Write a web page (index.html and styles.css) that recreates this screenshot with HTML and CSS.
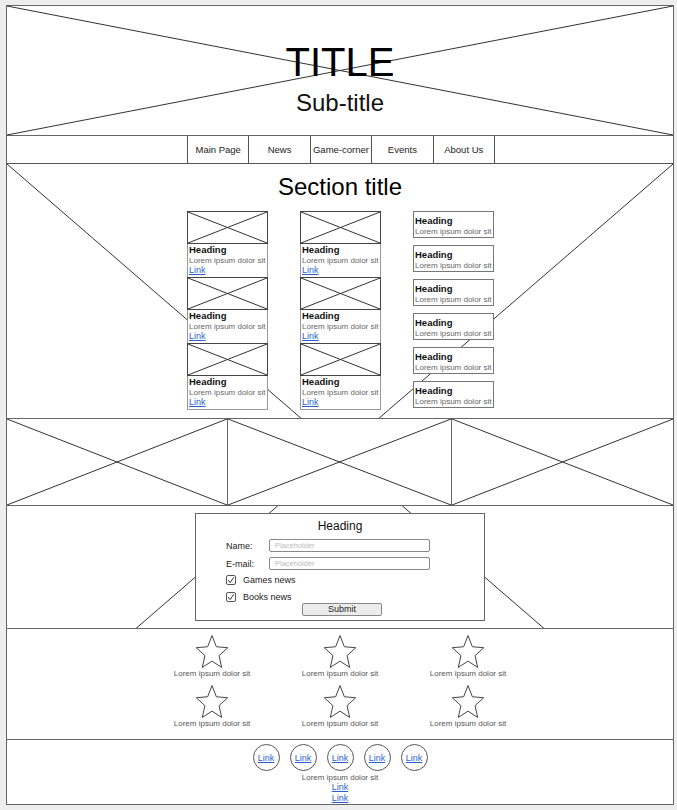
FILE: index.html
```html
<!DOCTYPE html>
<html lang="en">
<head>
<meta charset="utf-8">
<title>Wireframe</title>
<link rel="stylesheet" href="styles.css">
</head>
<body>
<div class="frame">
  <header class="hero">
    <svg class="xlines" viewBox="0 0 100 100" preserveAspectRatio="none"><line x1="0" y1="0" x2="100" y2="100"/><line x1="100" y1="0" x2="0" y2="100"/></svg>
    <h1 class="title">TITLE</h1>
    <p class="subtitle">Sub-title</p>
  </header>

  <nav class="nav">
    <a class="nav-item">Main Page</a>
    <a class="nav-item">News</a>
    <a class="nav-item">Game-corner</a>
    <a class="nav-item">Events</a>
    <a class="nav-item">About Us</a>
  </nav>

  <main class="main">
    <svg class="xlines" viewBox="0 0 100 100" preserveAspectRatio="none"><line x1="0" y1="0" x2="100" y2="100"/><line x1="100" y1="0" x2="0" y2="100"/></svg>

    <section class="sec-cards">
      <h2 class="sec-title">Section title</h2>
      <div class="card-grid">
        <div class="stack">
          <div class="card">
            <div class="thumb"><svg class="xlines" viewBox="0 0 100 100" preserveAspectRatio="none"><line x1="0" y1="0" x2="100" y2="100"/><line x1="100" y1="0" x2="0" y2="100"/></svg></div>
            <div class="card-body"><div class="card-h">Heading</div><div class="card-t">Lorem ipsum dolor sit</div><a class="card-link">Link</a></div>
          </div>
          <div class="card">
            <div class="thumb"><svg class="xlines" viewBox="0 0 100 100" preserveAspectRatio="none"><line x1="0" y1="0" x2="100" y2="100"/><line x1="100" y1="0" x2="0" y2="100"/></svg></div>
            <div class="card-body"><div class="card-h">Heading</div><div class="card-t">Lorem ipsum dolor sit</div><a class="card-link">Link</a></div>
          </div>
          <div class="card">
            <div class="thumb"><svg class="xlines" viewBox="0 0 100 100" preserveAspectRatio="none"><line x1="0" y1="0" x2="100" y2="100"/><line x1="100" y1="0" x2="0" y2="100"/></svg></div>
            <div class="card-body"><div class="card-h">Heading</div><div class="card-t">Lorem ipsum dolor sit</div><a class="card-link">Link</a></div>
          </div>
        </div>
        <div class="stack">
          <div class="card">
            <div class="thumb"><svg class="xlines" viewBox="0 0 100 100" preserveAspectRatio="none"><line x1="0" y1="0" x2="100" y2="100"/><line x1="100" y1="0" x2="0" y2="100"/></svg></div>
            <div class="card-body"><div class="card-h">Heading</div><div class="card-t">Lorem ipsum dolor sit</div><a class="card-link">Link</a></div>
          </div>
          <div class="card">
            <div class="thumb"><svg class="xlines" viewBox="0 0 100 100" preserveAspectRatio="none"><line x1="0" y1="0" x2="100" y2="100"/><line x1="100" y1="0" x2="0" y2="100"/></svg></div>
            <div class="card-body"><div class="card-h">Heading</div><div class="card-t">Lorem ipsum dolor sit</div><a class="card-link">Link</a></div>
          </div>
          <div class="card">
            <div class="thumb"><svg class="xlines" viewBox="0 0 100 100" preserveAspectRatio="none"><line x1="0" y1="0" x2="100" y2="100"/><line x1="100" y1="0" x2="0" y2="100"/></svg></div>
            <div class="card-body"><div class="card-h">Heading</div><div class="card-t">Lorem ipsum dolor sit</div><a class="card-link">Link</a></div>
          </div>
        </div>
        <div class="minis">
          <div class="mini"><div class="card-h">Heading</div><div class="card-t">Lorem ipsum dolor sit</div></div>
          <div class="mini"><div class="card-h">Heading</div><div class="card-t">Lorem ipsum dolor sit</div></div>
          <div class="mini"><div class="card-h">Heading</div><div class="card-t">Lorem ipsum dolor sit</div></div>
          <div class="mini"><div class="card-h">Heading</div><div class="card-t">Lorem ipsum dolor sit</div></div>
          <div class="mini"><div class="card-h">Heading</div><div class="card-t">Lorem ipsum dolor sit</div></div>
          <div class="mini"><div class="card-h">Heading</div><div class="card-t">Lorem ipsum dolor sit</div></div>
        </div>
      </div>
    </section>

    <section class="strip">
      <div class="cell"><svg class="xlines" viewBox="0 0 100 100" preserveAspectRatio="none"><line x1="0" y1="0" x2="100" y2="100"/><line x1="100" y1="0" x2="0" y2="100"/></svg></div>
      <div class="cell"><svg class="xlines" viewBox="0 0 100 100" preserveAspectRatio="none"><line x1="0" y1="0" x2="100" y2="100"/><line x1="100" y1="0" x2="0" y2="100"/></svg></div>
      <div class="cell"><svg class="xlines" viewBox="0 0 100 100" preserveAspectRatio="none"><line x1="0" y1="0" x2="100" y2="100"/><line x1="100" y1="0" x2="0" y2="100"/></svg></div>
    </section>

    <section class="sec-form">
      <form class="form-box">
        <h3 class="form-h">Heading</h3>
        <div class="field f1"><label>Name:</label><input type="text" placeholder="Placeholder"></div>
        <div class="field f2"><label>E-mail:</label><input type="text" placeholder="Placeholder"></div>
        <div class="check c1"><svg class="cb" viewBox="0 0 10 10"><rect x="0.5" y="0.5" width="9" height="9" rx="1.5"/><path d="M2.2 5.1 L4.2 7.6 L7.8 2.2"/></svg><span>Games news</span></div>
        <div class="check c2"><svg class="cb" viewBox="0 0 10 10"><rect x="0.5" y="0.5" width="9" height="9" rx="1.5"/><path d="M2.2 5.1 L4.2 7.6 L7.8 2.2"/></svg><span>Books news</span></div>
        <button type="button" class="submit">Submit</button>
      </form>
    </section>

    <section class="stars">
      <div class="star-item"><svg class="star" viewBox="-9.7 -10.3 19.4 18.7" preserveAspectRatio="none"><path d="M0 -10 L2.645 -3.64 L9.511 -3.09 L4.28 1.391 L5.878 8.09 L0 4.5 L-5.878 8.09 L-4.28 1.391 L-9.511 -3.09 L-2.645 -3.64 Z"/></svg><p>Lorem ipsum dolor sit</p></div>
      <div class="star-item"><svg class="star" viewBox="-9.7 -10.3 19.4 18.7" preserveAspectRatio="none"><path d="M0 -10 L2.645 -3.64 L9.511 -3.09 L4.28 1.391 L5.878 8.09 L0 4.5 L-5.878 8.09 L-4.28 1.391 L-9.511 -3.09 L-2.645 -3.64 Z"/></svg><p>Lorem ipsum dolor sit</p></div>
      <div class="star-item"><svg class="star" viewBox="-9.7 -10.3 19.4 18.7" preserveAspectRatio="none"><path d="M0 -10 L2.645 -3.64 L9.511 -3.09 L4.28 1.391 L5.878 8.09 L0 4.5 L-5.878 8.09 L-4.28 1.391 L-9.511 -3.09 L-2.645 -3.64 Z"/></svg><p>Lorem ipsum dolor sit</p></div>
      <div class="star-item"><svg class="star" viewBox="-9.7 -10.3 19.4 18.7" preserveAspectRatio="none"><path d="M0 -10 L2.645 -3.64 L9.511 -3.09 L4.28 1.391 L5.878 8.09 L0 4.5 L-5.878 8.09 L-4.28 1.391 L-9.511 -3.09 L-2.645 -3.64 Z"/></svg><p>Lorem ipsum dolor sit</p></div>
      <div class="star-item"><svg class="star" viewBox="-9.7 -10.3 19.4 18.7" preserveAspectRatio="none"><path d="M0 -10 L2.645 -3.64 L9.511 -3.09 L4.28 1.391 L5.878 8.09 L0 4.5 L-5.878 8.09 L-4.28 1.391 L-9.511 -3.09 L-2.645 -3.64 Z"/></svg><p>Lorem ipsum dolor sit</p></div>
      <div class="star-item"><svg class="star" viewBox="-9.7 -10.3 19.4 18.7" preserveAspectRatio="none"><path d="M0 -10 L2.645 -3.64 L9.511 -3.09 L4.28 1.391 L5.878 8.09 L0 4.5 L-5.878 8.09 L-4.28 1.391 L-9.511 -3.09 L-2.645 -3.64 Z"/></svg><p>Lorem ipsum dolor sit</p></div>
    </section>
  </main>

  <footer class="footer">
    <div class="circles">
      <a class="circle">Link</a>
      <a class="circle">Link</a>
      <a class="circle">Link</a>
      <a class="circle">Link</a>
      <a class="circle">Link</a>
    </div>
    <p class="foot-text">Lorem ipsum dolor sit</p>
    <a class="foot-link">Link</a>
    <a class="foot-link">Link</a>
  </footer>
</div>
</body>
</html>
```

FILE: styles.css
```css
* { box-sizing: border-box; }

html, body { margin: 0; padding: 0; }

body {
  background: #eeeeee;
  font-family: "Liberation Sans", Arial, sans-serif;
  color: #222;
}

.frame {
  width: 668px;
  height: 800px;
  margin: 5px 0 0 6px;
  border: 1px solid #666;
  background: #fff;
  display: flex;
  flex-direction: column;
}

.xlines {
  position: absolute;
  left: 0;
  top: 0;
  width: 100%;
  height: 100%;
  display: block;
  overflow: visible;
}
.xlines line {
  stroke: #333;
  stroke-width: 1;
  vector-effect: non-scaling-stroke;
}

/* Header */
.hero {
  position: relative;
  height: 130px;
  flex: none;
  border-bottom: 1px solid #666;
  padding-top: 36px;
  text-align: center;
}
.title {
  position: relative;
  margin: 0;
  font-size: 40px;
  line-height: 40px;
  font-weight: normal;
  color: #000;
}
.subtitle {
  position: relative;
  margin: 9px 0 0;
  font-size: 24px;
  line-height: 24px;
  color: #111;
}

/* Nav */
.nav {
  height: 28px;
  flex: none;
  border-bottom: 1px solid #555;
  display: flex;
  padding-left: 180px;
}
.nav-item {
  width: 61.4px;
  border-left: 1px solid #555;
  display: flex;
  align-items: center;
  justify-content: center;
  font-size: 9.5px;
  color: #222;
  white-space: nowrap;
}
.nav-item:last-child { border-right: 1px solid #555; width: 62.4px; }

/* Main area with big X behind */
.main {
  position: relative;
  flex: none;
  display: flex;
  flex-direction: column;
}

.sec-cards {
  position: relative;
  height: 255px;
  border-bottom: 1px solid #666;
  padding-top: 11px;
}
.sec-title {
  margin: 0;
  text-align: center;
  font-size: 24px;
  line-height: 24px;
  font-weight: normal;
  color: #000;
}
.card-grid {
  display: grid;
  grid-template-columns: repeat(3, 81px);
  column-gap: 32px;
  margin: 12px 0 0 180px;
  align-items: start;
}
.thumb {
  position: relative;
  height: 33px;
  border: 1px solid #444;
  background: #fff;
}
.card-body {
  height: 33px;
  border-left: 1px solid #999;
  border-right: 1px solid #999;
  padding-left: 1px;
  background: #fff;
}
.card:last-child .card-body {
  height: 34px;
  border-bottom: 1px solid #999;
}
.card-h {
  font-weight: bold;
  font-size: 9.5px;
  line-height: 11px;
  color: #111;
  white-space: nowrap;
}
.card-t {
  font-size: 8px;
  line-height: 9px;
  margin-top: 1px;
  color: #666;
  white-space: nowrap;
}
.card-link {
  display: block;
  font-size: 9px;
  line-height: 10px;
  color: #2b5fd0;
  text-decoration: underline;
}
.minis {
  display: flex;
  flex-direction: column;
  gap: 7px;
}
.mini {
  height: 27px;
  border: 1px solid #777;
  background: #fff;
  padding: 3px 0 0 1px;
}

/* Image strip */
.strip {
  position: relative;
  height: 87px;
  border-bottom: 1px solid #666;
  display: grid;
  grid-template-columns: 220px 224px 222px;
  background: #fff;
}
.cell { position: relative; }
.cell + .cell { border-left: 1px solid #666; }

/* Form */
.sec-form {
  position: relative;
  height: 123px;
  border-bottom: 1px solid #666;
  padding-top: 7px;
}
.form-box {
  width: 290px;
  height: 108px;
  margin: 0 auto;
  border: 1px solid #666;
  background: #fff;
  padding-top: 5px;
}
.form-h {
  margin: 0;
  text-align: center;
  font-size: 12px;
  line-height: 14px;
  font-weight: normal;
  color: #111;
}
.field {
  display: flex;
  align-items: center;
  height: 13px;
  margin-left: 30px;
}
.field label {
  width: 43px;
  font-size: 9px;
  color: #222;
}
.field input {
  width: 161px;
  height: 13px;
  margin: 0;
  border: 1px solid #888;
  border-radius: 2px;
  padding: 0 5px;
  font-family: inherit;
  font-size: 7.5px;
  background: #fff;
  outline: none;
}
.field input::placeholder { color: #bbb; }
.f1 { margin-top: 6px; }
.f2 { margin-top: 5px; }
.check {
  display: flex;
  align-items: center;
  height: 10px;
  margin-left: 30px;
  font-size: 9px;
  line-height: 10px;
  color: #222;
}
.check span { margin-left: 7px; }
.c1 { margin-top: 5px; }
.c2 { margin-top: 7px; }
.cb { width: 10px; height: 10px; display: block; flex: none; }
.cb rect { fill: #fff; stroke: #555; stroke-width: 1; }
.cb path { fill: none; stroke: #333; stroke-width: 1; }
.submit {
  display: block;
  margin: 1px 0 0 106px;
  width: 80px;
  height: 12.5px;
  padding: 0;
  border: 1px solid #888;
  border-radius: 2px;
  background: #ececec;
  font-family: inherit;
  font-size: 9px;
  line-height: 10px;
  color: #222;
}

/* Stars */
.stars {
  position: relative;
  height: 111px;
  border-bottom: 1px solid #666;
  background: #fff;
  padding-top: 6px;
  display: grid;
  grid-template-columns: repeat(3, 128px);
  justify-content: center;
  align-content: start;
  row-gap: 6px;
}
.star-item { text-align: center; }
.star {
  display: block;
  width: 32px;
  height: 33px;
  margin: 0 auto;
  overflow: visible;
}
.star path {
  fill: none;
  stroke: #444;
  stroke-width: 1;
  vector-effect: non-scaling-stroke;
}
.star-item p {
  margin: 1px 0 0;
  font-size: 8px;
  line-height: 10px;
  color: #555;
}

/* Footer */
.footer {
  flex: none;
  height: 64px;
  padding-top: 4px;
  text-align: center;
}
.circles {
  display: flex;
  justify-content: center;
  gap: 10px;
}
.circle {
  width: 27px;
  height: 27px;
  border: 1px solid #555;
  border-radius: 50%;
  display: flex;
  align-items: center;
  justify-content: center;
  font-size: 9px;
  color: #2b5fd0;
  text-decoration: underline;
}
.foot-text {
  margin: 3px 0 0;
  font-size: 8px;
  line-height: 8px;
  color: #555;
}
.foot-link {
  display: block;
  font-size: 9px;
  line-height: 11px;
  color: #2b5fd0;
  text-decoration: underline;
}
```
